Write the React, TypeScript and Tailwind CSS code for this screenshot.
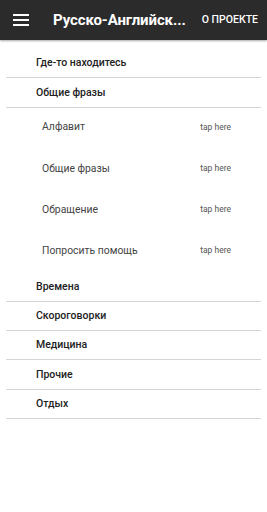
import { useState } from 'react'

interface Section {
  title: string
  items?: string[]
}

const sections: Section[] = [
  { title: 'Где-то находитесь' },
  { title: 'Общие фразы', items: ['Алфавит', 'Общие фразы', 'Обращение', 'Попросить помощь'] },
  { title: 'Времена' },
  { title: 'Скороговорки' },
  { title: 'Медицина' },
  { title: 'Прочие' },
  { title: 'Отдых' },
]

export default function App() {
  const [openIndex, setOpenIndex] = useState<number | null>(1)

  return (
    <div className="min-h-screen bg-white font-['Roboto','Liberation_Sans',sans-serif]">
      {/* Toolbar */}
      <header className="h-10 bg-[#2b2b2b] flex items-center text-white shadow-[0_1px_2px_rgba(0,0,0,0.35)]">
        <button className="w-[41px] pl-[13px] flex items-center">
          <svg width="16" height="12" viewBox="0 0 16 12" fill="#fff">
            <rect x="0" y="0" width="16" height="2" />
            <rect x="0" y="5" width="16" height="2" />
            <rect x="0" y="10" width="16" height="2" />
          </svg>
        </button>
        <h1 className="ml-[12px] whitespace-nowrap text-[15px] font-bold tracking-[-0.1px]">
          Русско-Английск...
        </h1>
        <span className="ml-auto pr-[9px] text-[10.5px] font-medium">О ПРОЕКТЕ</span>
      </header>

      {/* List */}
      <div className="pt-[9px]">
        {sections.map((s, i) => (
          <div key={i}>
            <button
              onClick={() => setOpenIndex(openIndex === i ? null : i)}
              className="w-full h-[28.3px] flex items-center pl-[36px] text-left text-[10.5px] font-medium text-[#222]"
            >
              {s.title}
            </button>
            <div className="mx-[6px] h-px bg-[#d4d4d4]" />
            {openIndex === i && s.items && (
              <div className="-mt-px pb-px">
                {s.items.map((item) => (
                  <div key={item} className="h-[41.2px] flex items-center pl-[42px] pr-[36px]">
                    <span className="text-[10.4px] text-[#444]">{item}</span>
                    <span className="ml-auto text-[8.5px] text-[#555]">tap here</span>
                  </div>
                ))}
              </div>
            )}
          </div>
        ))}
      </div>
    </div>
  )
}
